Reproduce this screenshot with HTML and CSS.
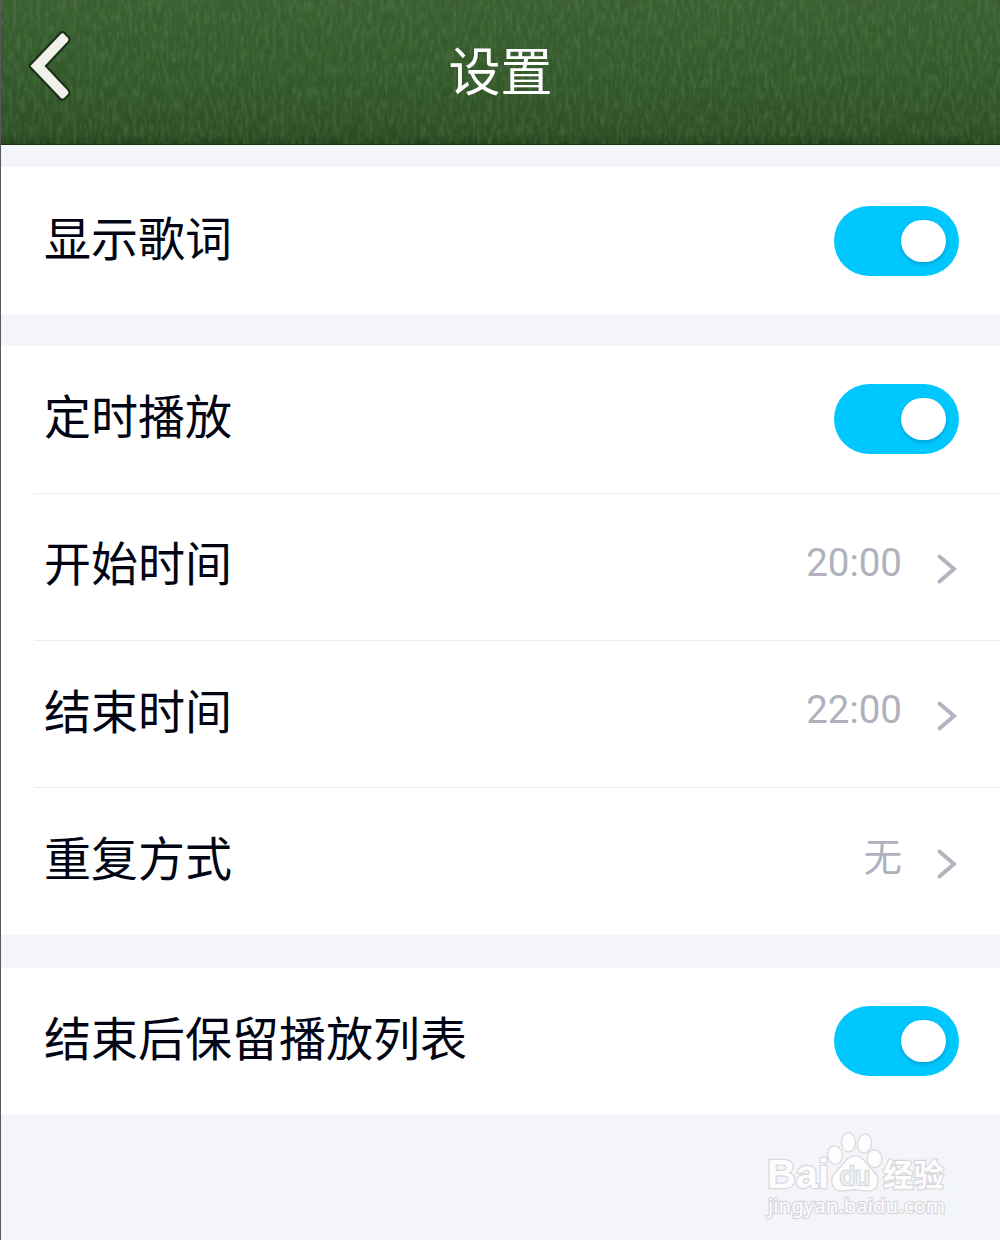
FILE: index.html
```html
<!DOCTYPE html>
<html lang="zh-CN">
<head>
    <meta charset="UTF-8">
    <meta name="viewport" content="width=device-width, initial-scale=1.0">
    <title>设置</title>
    <link rel="stylesheet" href="styles.css">
</head>
<body>
    <header class="header">
        <!-- fabric texture -->
        <svg class="texture" width="1000" height="145">
            <filter id="weave-v" x="0" y="0" width="100%" height="100%">
                <feTurbulence type="fractalNoise" baseFrequency="0.25 0.08" numOctaves="3" seed="4"/>
                <feColorMatrix values="0 0 0 0 0.3  0 0 0 0 0.5  0 0 0 0 0.24  1 0 0 0 -0.4"/>
            </filter>
            <filter id="weave-h" x="0" y="0" width="100%" height="100%">
                <feTurbulence type="fractalNoise" baseFrequency="0.05 0.25" numOctaves="2" seed="9"/>
                <feColorMatrix values="0 0 0 0 0.05  0 0 0 0 0.15  0 0 0 0 0.03  1 0 0 0 -0.4"/>
            </filter>
            <rect width="1000" height="145" filter="url(#weave-v)"/>
            <rect width="1000" height="145" filter="url(#weave-h)"/>
        </svg>
        <a class="back" href="#">
            <svg width="54" height="80" viewBox="0 0 54 80">
                <path class="back-edge" d="M39.500 8.500L44 13Q45 14.500 44 16L20.500 41L44 66Q45 67.500 44 69L40 73Q38.500 74 37 73L6.500 41L37 9Q38.500 8 39.500 8.500Z"/>
            </svg>
        </a>
        <h1>设置</h1>
    </header>

    <main class="settings">
        <section class="group">
            <div class="row">
                <span class="label">显示歌词</span>
                <span class="switch"><span class="knob"></span></span>
            </div>
        </section>

        <section class="group">
            <div class="row">
                <span class="label">定时播放</span>
                <span class="switch"><span class="knob"></span></span>
            </div>
            <div class="row">
                <span class="label">开始时间</span>
                <span class="value">20:00</span>
                <svg class="arrow" width="22" height="32" viewBox="0 0 22 32"><path d="M3.5 3.5 L18 16 L3.5 28.5"/></svg>
            </div>
            <div class="row">
                <span class="label">结束时间</span>
                <span class="value">22:00</span>
                <svg class="arrow" width="22" height="32" viewBox="0 0 22 32"><path d="M3.5 3.5 L18 16 L3.5 28.5"/></svg>
            </div>
            <div class="row">
                <span class="label">重复方式</span>
                <span class="value">无</span>
                <svg class="arrow" width="22" height="32" viewBox="0 0 22 32"><path d="M3.5 3.5 L18 16 L3.5 28.5"/></svg>
            </div>
        </section>

        <section class="group">
            <div class="row">
                <span class="label">结束后保留播放列表</span>
                <span class="switch"><span class="knob"></span></span>
            </div>
        </section>
    </main>

    <svg class="watermark" width="200" height="100" viewBox="0 0 200 100">
        <g class="mark">
            <text class="latin" x="7" y="68" textLength="62" lengthAdjust="spacingAndGlyphs">Bai</text>
            <ellipse cx="75" cy="35" rx="6.7" ry="8.7" transform="rotate(-10 75 35)"/>
            <ellipse cx="88.5" cy="22.3" rx="6.5" ry="9"/>
            <ellipse cx="104.500" cy="23.5" rx="6.5" ry="9" transform="rotate(10 104.500 23.5)"/>
            <ellipse cx="114.500" cy="38.7" rx="6.8" ry="8.3" transform="rotate(-8 114.500 38.7)"/>
            <path d="M95 36.500C102 36.500 105 43 110 48.500C116 54 119 58 117 64.500C115 72 107 71 95 69C83 71 75 72 73 64.500C71 58 74 54 80 48.500C85 43 88 36.500 95 36.500Z"/>
            <text class="du" x="80" y="64.500" textLength="30" lengthAdjust="spacingAndGlyphs">du</text>
            <text class="han" x="123" y="66" textLength="61" lengthAdjust="spacingAndGlyphs">经验</text>
            <text class="site" x="8" y="93" textLength="177" lengthAdjust="spacingAndGlyphs">jingyan.baidu.com</text>
        </g>
    </svg>
</body>
</html>
```

FILE: styles.css
```css
* {
    box-sizing: border-box;
}

body {
    margin: 0;
    height: 1240px;
    position: relative;
    overflow: hidden;
    background-color: #f4f5fa;
    border-left: 1px solid #58595c;
    color: #020514;
    font-family: Roboto, "Noto Sans CJK SC", sans-serif;
}

.header {
    position: relative;
    display: grid;
    grid-template-columns: 100px 1fr 100px;
    height: 145px;
    margin-left: -1px;
    overflow: hidden;
    background: linear-gradient(#3a5e31, #33582b 55%, #2d4e25 93%, #233f1c);
    border-left: 1px solid #142c10;
    border-bottom: 1px solid #1c3517;
}

.texture {
    position: absolute;
    top: 0;
    left: 0;
    opacity: 0.45;
}

.back {
    position: relative;
    padding: 25px 0 0 23px;
}

.back svg {
    display: block;
}

.back-edge {
    fill: #f0f1e8;
    stroke: #1b2f19;
    stroke-width: 4.5;
    stroke-linejoin: round;
    paint-order: stroke;
}

h1 {
    position: relative;
    margin: 0;
    padding-top: 36px;
    color: #fff;
    font-size: 52px;
    line-height: 76px;
    font-weight: 400;
    text-align: center;
}

.settings {
    display: flex;
    flex-direction: column;
    padding-top: 22px;
}

.group {
    margin-bottom: 30.5px;
    padding-left: 33px;
    background-color: #fff;
}

.group:nth-child(2) {
    margin-bottom: 33px;
}

.row {
    display: flex;
    align-items: center;
    height: 147.3px;
    padding: 0 41px 0 10px;
}

.row + .row {
    border-top: 1px solid #ebecee;
}

.group:first-child .row {
    height: 148px;
}

.label {
    flex: 1;
    padding-bottom: 3px;
    font-size: 47px;
    line-height: 68px;
}

.value {
    padding-bottom: 8px;
    color: #b0b1bc;
    font-size: 38.5px;
    line-height: 50px;
}

.arrow {
    margin: 4px 1px 0 34px;
}

.arrow path {
    fill: none;
    stroke: #b3b4c0;
    stroke-width: 4;
    stroke-linecap: round;
}

.switch {
    display: flex;
    align-items: center;
    justify-content: flex-end;
    width: 125px;
    height: 70px;
    padding-right: 13px;
    border-radius: 35px;
    background-color: #00c8ff;
}

.knob {
    width: 45px;
    height: 42px;
    border-radius: 21px;
    background-color: #fff;
    box-shadow: 0 2px 4px rgba(0, 70, 110, 0.3);
}

.watermark {
    position: absolute;
    left: 759px;
    top: 1120px;
}

.mark {
    fill: #fdfdfe;
    stroke: #d6d7db;
    stroke-width: 2.4;
    paint-order: stroke;
}

.latin {
    font: bold 40px "Liberation Sans", sans-serif;
}

.du {
    font: 26px "Liberation Sans", sans-serif;
    fill: #f0f1f4;
}

.han {
    font: bold 31px "Noto Sans CJK SC", sans-serif;
}

.site {
    font: 20px "Noto Sans", sans-serif;
}
```
